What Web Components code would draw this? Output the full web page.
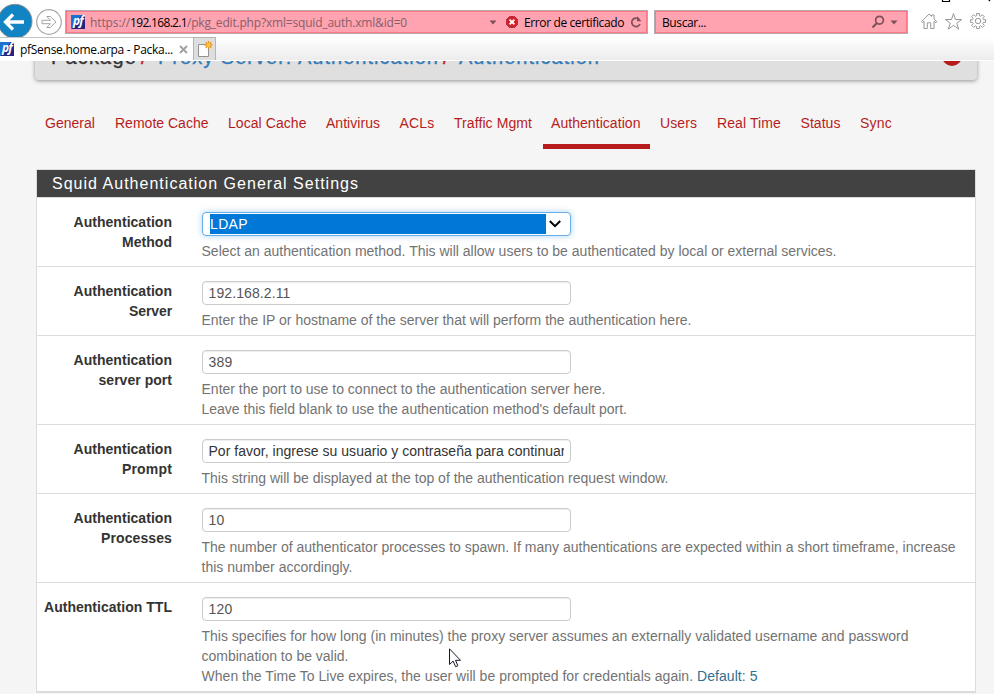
<!DOCTYPE html>
<html lang="es">
<head>
<meta charset="utf-8">
<title>pfSense.home.arpa - Package</title>
<style>
html,body{margin:0;height:694px;overflow:hidden;background:#f5f5f5}
body{font-family:"Liberation Sans",Arial,sans-serif;font-size:14px;line-height:20px;color:#333}
</style>
</head>
<body>
<admin-page></admin-page>
<script>
const define = (name, html, init) => customElements.define(name, class extends HTMLElement {
  constructor(){
    super();
    this.attachShadow({mode:'open'});
  }
  connectedCallback(){
    this.shadowRoot.innerHTML = html;
    if (init) init.call(this, this.shadowRoot);
  }
});

// A single line of text whose tracking is tuned so that it takes the width given in "w".
define('fit-text', `<style>:host{display:block;white-space:pre;width:max-content}span{display:inline-block}</style><span><slot></slot></span>`, function(r){
  const s = r.querySelector('span'), w = +this.getAttribute('w'), n = this.textContent.length;
  if (!w) return;
  s.style.letterSpacing = '0px';
  const d = (w - s.getBoundingClientRect().width) / n;
  s.style.letterSpacing = d.toFixed(4) + 'px';
});

define('pf-icon', `<style>:host{display:block;width:14px;height:14px;flex:none}
div{width:14px;height:14px;box-sizing:border-box;background:linear-gradient(125deg,#1c72cf 0 42%,#252483 46%);color:#fff;font:italic bold 12px/12px "Open Sans",sans-serif;letter-spacing:-.7px;text-align:center;overflow:hidden}</style><div>pf</div>`);

define('browser-bar', `<style>
:host{display:block;position:relative;height:61px;background:linear-gradient(#fff 0 37px,#ececec 60px,#fff 60px);font:12px/16px "Open Sans","Noto Sans",sans-serif;color:#000;overflow:hidden}
.row{display:flex;height:38px;align-items:flex-start}
.nav{width:65px;height:38px;flex:none}
.box{box-sizing:border-box;height:24px;margin-top:10px;border:1px solid #b3abad;background:#ffa3b1;box-shadow:inset 0 0 0 1px #ff7688;display:flex;align-items:center}
.box fit-text{padding-top:2px}
.addr{width:583px;padding-left:5px}
.search{width:254px;margin-left:6px;padding-left:7px}
.addr pf-icon{margin-right:5px}
.url{display:flex;color:#876069}.url b{font-weight:400;color:#000}
svg{display:block;flex:none}
.tabs{position:absolute;left:0;top:37px;height:23px;display:flex}
.tab{width:193px;height:23px;background:#fff;border-top:1px solid #c4c4c4;box-sizing:border-box;display:flex;align-items:center}
.tab fit-text{margin-left:6px;padding-top:2px}
.new{width:23px;height:23px;background:#dedede;border:1px solid #b5b5b5;border-bottom:0;box-sizing:border-box}
</style>
<div class="row">
 <svg class="nav" viewBox="0 0 65 38"><circle cx="15" cy="21.3" r="17" fill="#1283c3" stroke="#8d8d8d"/><path d="M24 22H6M13 14.5L5.5 22l7.500 7.500" fill="none" stroke="#fff" stroke-width="3.300"/><circle cx="49" cy="22" r="12.300" fill="#fff" stroke="#a9a9a9" stroke-width="1.200"/><path d="M42 20.300h8.500l-3.700-3.800h3.500l5.700 5.500-5.700 5.500h-3.500l3.700-3.800H42z" fill="#fff" stroke="#a4a4a4"/></svg>
 <div class="box addr"><pf-icon></pf-icon>
  <div class="url"><fit-text w="40">https://</fit-text><b><fit-text w="57">192.168.2.1</fit-text></b><fit-text w="220">/pkg_edit.php?xml=squid_auth.xml&amp;id=0</fit-text></div>
  <svg style="margin-left:82px" width="8" height="5" viewBox="0 0 8 5"><path d="M.5.500h7L4 4.500z" fill="#7d5058"/></svg>
  <svg style="margin-left:9px" width="12" height="12" viewBox="0 0 12 12"><path d="M3.500.500h5l3 3v5l-3 3h-5l-3-3v-5z" fill="#d3202b" stroke="#a51820" stroke-width=".7"/><path d="M3.600 3.600l4.800 4.800M8.400 3.600L3.600 8.400" stroke="#fff" stroke-width="1.800"/></svg>
  <fit-text w="100" style="margin-left:6px">Error de certificado</fit-text>
  <svg style="margin-left:6px" width="12" height="13" viewBox="0 0 12 13"><path d="M9 3.200A4.300 4.300 0 1 0 10 8" fill="none" stroke="#7d5058" stroke-width="1.700"/><path d="M7 .2v5h4.500z" fill="#7d5058"/></svg>
 </div>
 <div class="box search"><fit-text w="44">Buscar...</fit-text>
  <svg style="margin-left:165px" width="14" height="14" viewBox="0 0 14 14"><circle cx="8.500" cy="5.200" r="3.900" fill="none" stroke="#7d5058" stroke-width="1.700"/><path d="M6 8L1.500 12.500" stroke="#7d5058" stroke-width="2.200"/></svg>
  <svg style="margin-left:5px" width="8" height="5" viewBox="0 0 8 5"><path d="M.5.500h7L4 4.500z" fill="#7d5058"/></svg>
 </div>
 <svg width="86" height="38" viewBox="908 0 86 38" fill="none" stroke="#999" stroke-width="1"><path d="M921.500 21.700L929 14l2.500 2.500V15h2.500v4l2.800 2.700-1 1.100-1.800-1.500v7.200h-3.300v-5.700h-3.400v5.700H924v-7.200l-1.500 1.500z"/><path d="M953.500 13.500l2 6h6.200l-5 3.700 2 5.900-5.200-3.700-5.200 3.700 2-5.900-5-3.700h6.200z"/><circle cx="978" cy="21" r="2.700"/><path d="M976.600 13.500h2.800v2.200l1.300.6 1.700-1.600 2 2-1.600 1.700.6 1.300h2.200v2.700h-2.200l-.6 1.300 1.600 1.700-2 2-1.700-1.600-1.300.6v2.100h-2.800v-2.100l-1.300-.6-1.700 1.600-2-2 1.600-1.700-.6-1.300h-2.200v-2.700h2.200l.6-1.300-1.600-1.700 2-2 1.700 1.600 1.300-.6z"/><path d="M942.500-1v2.500h7V-1M988-1l2 2" stroke="#000" stroke-width="1.200"/></svg>
</div>
<div class="tabs"><div class="tab"><pf-icon></pf-icon><fit-text w="153">pfSense.home.arpa - Packa...</fit-text><svg style="margin-left:6px" width="9" height="9" viewBox="0 0 9 9"><path d="M1 1l7 7M8 1L1 8" stroke="#a2a2a2" stroke-width="2"/></svg></div>
<div class="new"><svg width="21" height="22" viewBox="0 0 21 22"><path d="M4.500 6.500h10v12h-10z" fill="#fcfcfc" stroke="#929292"/><path d="M14.500 3v8M10.500 7h8M11.700 4.200l5.600 5.600M17.300 4.200l-5.600 5.600" stroke="#e5951a" stroke-width="1.300"/><circle cx="14.500" cy="7" r="2" fill="#ffc14d"/></svg></div></div>`);

define('page-title', `<style>
:host{display:block;height:25px;overflow:hidden}
.bar{box-sizing:border-box;width:942px;height:39px;margin:-20px 0 0 35px;padding:4px 14px 0 16px;background:#dfdfdf;border-radius:4px;box-shadow:0 1px 4px rgba(0,0,0,.4);display:flex;font-size:20px;line-height:24px;color:#333;-webkit-text-stroke:.3px}
a{color:#337ab7}i{font-style:normal;color:#c9141c;margin-left:4px}
svg{margin:2px 0 0 auto}
</style><div class="bar"><fit-text w="86">Package</fit-text><i><fit-text w="17">/ </fit-text></i><a><fit-text w="281">Proxy Server: Authentication</fit-text></a><i><fit-text w="16">/ </fit-text></i><a><fit-text w="141">Authentication</fit-text></a><svg width="22" height="20" viewBox="0 0 22 20"><circle cx="11" cy="9" r="10" fill="#b71c1c"/></svg></div>`);

define('tab-strip', `<style>:host{display:flex;height:63px;margin-left:37px;align-items:flex-end}</style><slot></slot>`);
define('tab-link', `<style>:host{display:block;box-sizing:border-box;height:45px;padding:9px 0 0 8px;color:#b71c1c;border-bottom:5px solid transparent;flex:none}:host([active]){border-color:#b71c1c}</style><fit-text></fit-text>`, function(r){
  const w = +this.getAttribute('w'), gap = +this.getAttribute('next');
  this.style.width = gap + 'px';
  const t = document.createElement('fit-text');
  t.setAttribute('w', w);
  t.textContent = this.getAttribute('label');
  r.querySelector('fit-text').replaceWith(t);
});

define('settings-panel', `<style>:host{display:block;box-sizing:border-box;width:940px;margin:20px 0 0 36px;border:1px solid #dcdcdc;background:#fff}
header{height:27px;background:#424242;color:#fff;border-bottom:1px solid #dcdcdc;padding-left:15px;font-size:16px;line-height:27px}</style>
<header><fit-text w="307">Squid Authentication General Settings</fit-text></header><slot></slot>`);

define('form-row', `<style>:host{display:flex;box-sizing:border-box;padding:14px 0 5px;border-bottom:1px solid #dcdcdc}
.l{width:135px;margin-right:30px;font-weight:700;display:flex;flex-direction:column;align-items:flex-end;flex:none}
.h{margin:5px 0 0 -.5px;color:#737373}</style><div class="l"><slot name="label"></slot></div><div><slot></slot><div class="h"><slot name="help"></slot></div></div>`);

define('text-field', `<style>:host{display:flex;align-items:center;box-sizing:border-box;width:369px;height:24px;border:1px solid #ccc;border-radius:4px;padding:0 6px 0 5.5px;background:#fff;color:#555;box-shadow:inset 0 1px 1px rgba(0,0,0,.075)}
div{overflow:hidden}</style><div><slot></slot></div>`);
define('select-field', `<style>:host{display:flex;align-items:center;box-sizing:border-box;width:369px;height:24px;border:1px solid #66afe9;border-radius:4px;padding:0 7px 0 7px;background:#fff;color:#fff;box-shadow:0 0 6px rgba(102,175,233,.55)}
div{background:#0078d7;width:336px;height:20px;box-sizing:border-box}svg{margin-left:3px}</style><div><slot></slot></div><svg width="12" height="8" viewBox="0 0 12 8"><path d="M.8 1l5.200 5.200L11.200 1" fill="none" stroke="#000" stroke-width="2"/></svg>`);

define('mouse-pointer', `<style>:host{display:block;position:absolute;left:449px;top:648px}svg{display:block}</style><svg width="13" height="20" viewBox="0 0 13 20"><path d="M.5.800v15.700l3.600-3.400 2.500 5.600 2.300-1-2.400-5.400h5z" fill="#fff" stroke="#18182a"/></svg>`);

define('admin-page', `<style>:host{display:block;position:relative;width:994px;height:694px;overflow:hidden;background:#f5f5f5}.p{color:#333}.blue{color:#31708f}.line{display:flex}</style>
<browser-bar></browser-bar><page-title></page-title>
<tab-strip>
<tab-link label="General" w="50" next="70"></tab-link><tab-link label="Remote Cache" w="93.5" next="113"></tab-link><tab-link label="Local Cache" w="78.5" next="98"></tab-link><tab-link label="Antivirus" w="54" next="73.5"></tab-link><tab-link label="ACLs" w="35" next="54.5"></tab-link><tab-link label="Traffic Mgmt" w="78" next="97"></tab-link><tab-link label="Authentication" w="89.500" next="107" active></tab-link><tab-link label="Users" w="37" next="57" style="margin-left:2px"></tab-link><tab-link label="Real Time" w="64" next="83.5"></tab-link><tab-link label="Status" w="40" next="59.5"></tab-link><tab-link label="Sync" w="32" next="50"></tab-link>
</tab-strip>
<settings-panel>
<form-row><fit-text slot="label" w="98.500">Authentication</fit-text><fit-text slot="label" w="50">Method</fit-text><select-field><fit-text w="38">LDAP</fit-text></select-field><fit-text slot="help" w="635">Select an authentication method. This will allow users to be authenticated by local or external services.</fit-text></form-row>
<form-row><fit-text slot="label" w="98.500">Authentication</fit-text><fit-text slot="label" w="43">Server</fit-text><text-field><fit-text w="82">192.168.2.11</fit-text></text-field><fit-text slot="help" w="490">Enter the IP or hostname of the server that will perform the authentication here.</fit-text></form-row>
<form-row><fit-text slot="label" w="98.500">Authentication</fit-text><fit-text slot="label" w="73.500">server port</fit-text><text-field><fit-text w="24">389</fit-text></text-field><fit-text slot="help" w="404">Enter the port to use to connect to the authentication server here.</fit-text><fit-text slot="help" w="425.500">Leave this field blank to use the authentication method's default port.</fit-text></form-row>
<form-row><fit-text slot="label" w="98.500">Authentication</fit-text><fit-text slot="label" w="50">Prompt</fit-text><text-field class="p"><fit-text w="357">Por favor, ingrese su usuario y contraseña para continuar</fit-text></text-field><fit-text slot="help" w="467">This string will be displayed at the top of the authentication request window.</fit-text></form-row>
<form-row><fit-text slot="label" w="98.500">Authentication</fit-text><fit-text slot="label" w="71">Processes</fit-text><text-field><fit-text w="16">10</fit-text></text-field><fit-text slot="help" w="754">The number of authenticator processes to spawn. If many authentications are expected within a short timeframe, increase</fit-text><fit-text slot="help" w="151">this number accordingly.</fit-text></form-row>
<form-row><fit-text slot="label" w="128">Authentication TTL</fit-text><text-field><fit-text w="24">120</fit-text></text-field><fit-text slot="help" w="707">This specifies for how long (in minutes) the proxy server assumes an externally validated username and password</fit-text><fit-text slot="help" w="147">combination to be valid.</fit-text><div slot="help" class="line"><fit-text w="495.500">When the Time To Live expires, the user will be prompted for credentials again. </fit-text><fit-text class="blue" w="60.500">Default: 5</fit-text></div></form-row>
</settings-panel>
<mouse-pointer></mouse-pointer>`);
</script>
</body>
</html>
